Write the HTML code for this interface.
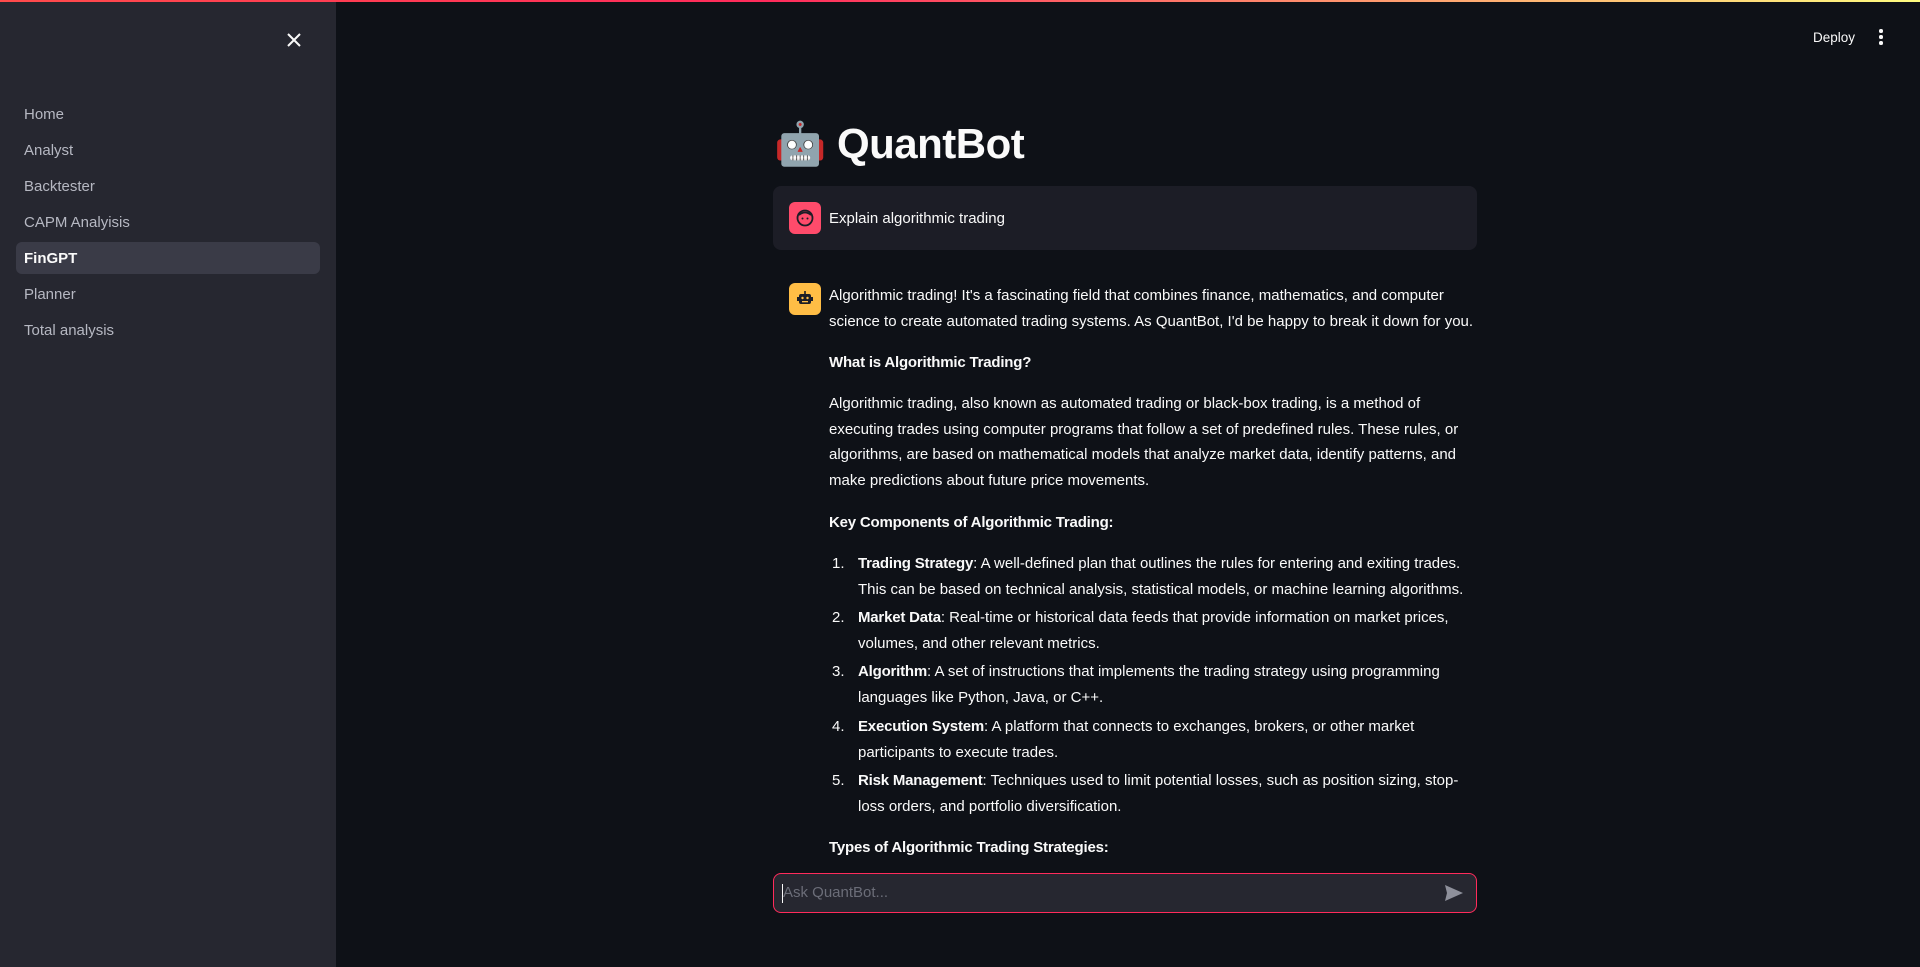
<!DOCTYPE html>
<html><head><meta charset="utf-8"><style>
*{box-sizing:border-box;margin:0;padding:0}
body{width:1920px;height:967px;background:#0e1117;font-family:"Liberation Sans",sans-serif;color:#fafafa;position:relative;overflow:hidden}
.top{position:absolute;left:0;top:0;width:1920px;height:2px;background:linear-gradient(90deg,#ff4b4b,#ff2b5b 40%,#fffd80)}
.side{position:absolute;left:0;top:2px;width:336px;height:965px;background:#262730}
.x{position:absolute;left:285px;top:29px;width:18px;height:18px}
.nav a{position:absolute;left:24px;font-size:15px;color:#b6b8c2;text-decoration:none;white-space:nowrap}
.act{position:absolute;left:16px;top:240px;width:304px;height:32px;background:#3a3b47;border-radius:6px}
.deploy{position:absolute;left:1813px;top:30px;font-size:13.5px;color:#fafafa}
.dots{position:absolute;left:1879px;top:29px}
.dots i{display:block;width:3.5px;height:3.5px;border-radius:50%;background:#fafafa;margin-bottom:2.5px}
h1{position:absolute;left:774px;top:120px;font-size:42px;font-weight:700;white-space:nowrap;letter-spacing:-0.5px}
.umsg{position:absolute;left:773px;top:186px;width:704px;height:64px;background:#1c1d26;border-radius:8px}
.av{position:absolute;width:32px;height:32px;border-radius:6px}
.t{position:absolute;left:829px;font-size:15px;white-space:nowrap;line-height:25.6px}
b{font-weight:700;letter-spacing:-0.2px}
.num{position:absolute;left:832px;font-size:15px;line-height:25.6px}
.inp{position:absolute;left:773px;top:873px;width:704px;height:40px;border:1.5px solid #ff2b5b;border-radius:8px;background:#262730}
</style></head><body>
<div class="top"></div>
<div class="side">
<svg class="x" viewBox="0 0 18 18"><path d="M3 3L15 15M15 3L3 15" stroke="#fafafa" stroke-width="2"/></svg>
<div class="act"></div>
<div class="nav">
<a style="top:104px">Home</a>
<a style="top:140px">Analyst</a>
<a style="top:176px">Backtester</a>
<a style="top:212px">CAPM Analyisis</a>
<a style="top:248px;color:#fafafa;font-weight:700">FinGPT</a>
<a style="top:284px">Planner</a>
<a style="top:320px">Total analysis</a>
</div></div>
<div class="deploy">Deploy</div>
<div class="dots" ><i></i><i></i><i></i></div>
<h1><span style="font-family:'Noto Color Emoji',sans-serif">🤖</span> QuantBot</h1>
<div class="umsg"></div>
<div class="av" style="left:789px;top:202px;background:#ff4b6b"><svg width="32" height="32" viewBox="0 0 32 32"><circle cx="16" cy="16" r="7.5" fill="none" stroke="#1c1d26" stroke-width="1.8"/><path d="M10 13q6-5 12 0" fill="none" stroke="#1c1d26" stroke-width="1.8"/><circle cx="13.5" cy="16.5" r="1" fill="#1c1d26"/><circle cx="18.5" cy="16.5" r="1" fill="#1c1d26"/></svg></div>
<div class="t" style="top:206px">Explain algorithmic trading</div>
<div class="av" style="left:789px;top:283px;background:#ffbd45"><svg width="32" height="32" viewBox="0 0 32 32"><rect x="10" y="11" width="12" height="10" rx="2" fill="#1c1d26"/><rect x="8" y="14" width="2" height="4" fill="#1c1d26"/><rect x="22" y="14" width="2" height="4" fill="#1c1d26"/><circle cx="13.5" cy="15" r="1.2" fill="#ffbd45"/><circle cx="18.5" cy="15" r="1.2" fill="#ffbd45"/><rect x="13" y="18" width="6" height="1.3" fill="#ffbd45"/><rect x="15.2" y="8" width="1.6" height="3" fill="#1c1d26"/></svg></div>
<div class="t" style="top:283px">Algorithmic trading! It's a fascinating field that combines finance, mathematics, and computer<br>science to create automated trading systems. As QuantBot, I'd be happy to break it down for you.</div>
<div class="t" style="top:350px"><b>What is Algorithmic Trading?</b></div>
<div class="t" style="top:391px">Algorithmic trading, also known as automated trading or black-box trading, is a method of<br>executing trades using computer programs that follow a set of predefined rules. These rules, or<br>algorithms, are based on mathematical models that analyze market data, identify patterns, and<br>make predictions about future price movements.</div>
<div class="t" style="top:510px"><b>Key Components of Algorithmic Trading:</b></div>
<div class="num" style="top:551px">1.</div><div class="t" style="left:858px;top:551px"><b>Trading Strategy</b>: A well-defined plan that outlines the rules for entering and exiting trades.<br>This can be based on technical analysis, statistical models, or machine learning algorithms.</div>
<div class="num" style="top:605px">2.</div><div class="t" style="left:858px;top:605px"><b>Market Data</b>: Real-time or historical data feeds that provide information on market prices,<br>volumes, and other relevant metrics.</div>
<div class="num" style="top:659px">3.</div><div class="t" style="left:858px;top:659px"><b>Algorithm</b>: A set of instructions that implements the trading strategy using programming<br>languages like Python, Java, or C++.</div>
<div class="num" style="top:714px">4.</div><div class="t" style="left:858px;top:714px"><b>Execution System</b>: A platform that connects to exchanges, brokers, or other market<br>participants to execute trades.</div>
<div class="num" style="top:768px">5.</div><div class="t" style="left:858px;top:768px"><b>Risk Management</b>: Techniques used to limit potential losses, such as position sizing, stop-<br>loss orders, and portfolio diversification.</div>
<div class="t" style="top:835px"><b>Types of Algorithmic Trading Strategies:</b></div>
<div class="inp"><div style="position:absolute;left:8px;top:10px;width:1px;height:19px;background:#fafafa"></div><div style="position:absolute;left:9px;top:10px;font-size:15px;color:#6b6d78">Ask QuantBot...</div>
<svg style="position:absolute;right:12px;top:10px" width="20" height="18" viewBox="0 0 20 18"><path d="M1 1L19 9L1 17L3 9Z" fill="#8e909b"/></svg></div>
</body></html>
